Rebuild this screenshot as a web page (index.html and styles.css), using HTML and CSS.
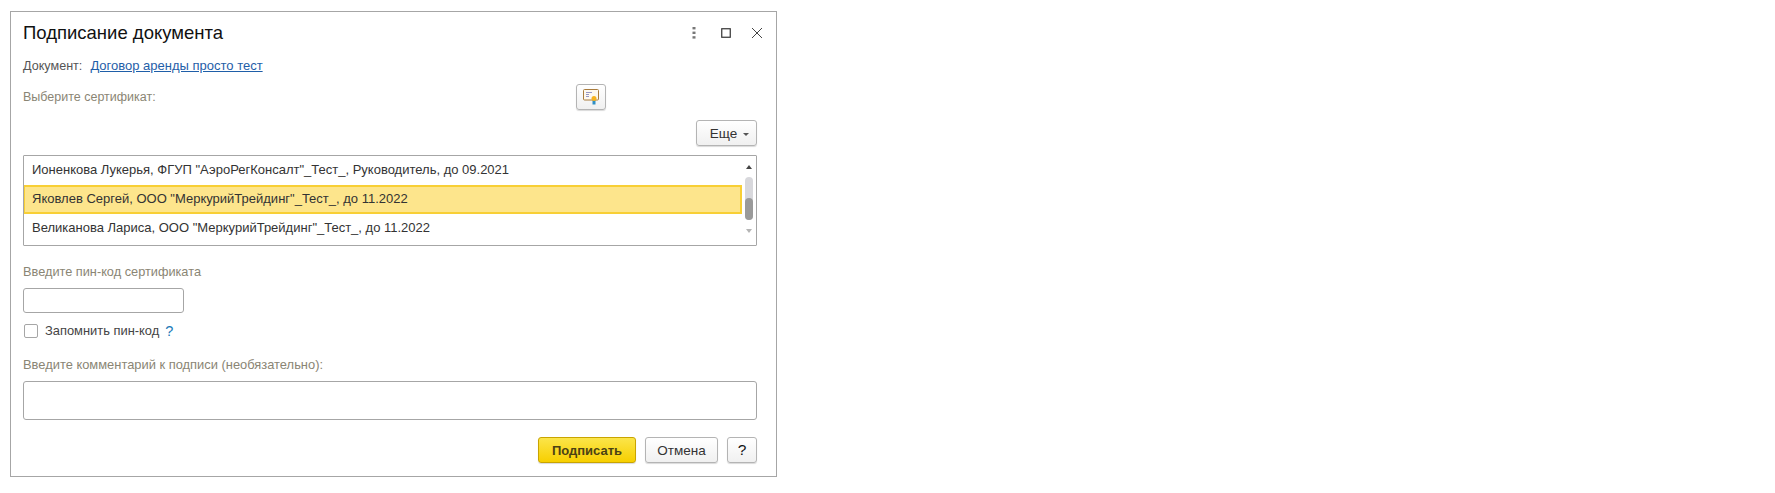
FILE: index.html
```html
<!DOCTYPE html>
<html lang="ru">
  <head>
    <meta charset="UTF-8" />
    <title>Подписание документа</title>
    <link rel="stylesheet" href="styles.css">
  </head>
  <body>
    <div class="dialog">
      <div class="title-row">
        <div class="title">Подписание документа</div>
        <div class="window-tools">
          <svg class="tool-dots" width="4" height="12" viewBox="0 0 4 12"><rect x="0.5" y="0" width="3" height="2.4" fill="#777"/><rect x="0.5" y="4.6" width="3" height="2.4" fill="#777"/><rect x="0.5" y="9.2" width="3" height="2.4" fill="#777"/></svg>
          <svg class="tool-max" width="10" height="10" viewBox="0 0 10 10"><rect x="0.75" y="0.75" width="8.5" height="8.5" fill="none" stroke="#333" stroke-width="1.2"/></svg>
          <svg class="tool-close" width="12" height="12" viewBox="0 0 12 12"><path d="M1 1l10 10M11 1L1 11" fill="none" stroke="#444" stroke-width="1"/></svg>
        </div>
      </div>

      <div class="doc-row">
        <span class="doc-label">Документ:</span>
        <a class="doc-link" href="#">Договор аренды просто тест</a>
      </div>

      <div class="cert-row">
        <span class="field-label cert-label">Выберите сертификат:</span>
        <button class="btn btn-icon">
          <svg width="18" height="18" viewBox="0 0 18 18">
            <rect x="1.5" y="1.5" width="15" height="10.5" rx="1" fill="#fdf8ee" stroke="#a87b3c" stroke-width="1"/>
            <path d="M4 4.5h6M4 6.5h3M4 8.5h3" stroke="#8a8ac0" stroke-width="0.9"/>
            <rect x="10.5" y="12" width="3" height="4.5" fill="#2f8fc4"/>
            <circle cx="12" cy="10.5" r="2.5" fill="#f7b21c"/>
          </svg>
        </button>
      </div>

      <div class="more-row">
        <button class="btn btn-more">Еще<span class="caret"></span></button>
      </div>

      <div class="cert-list">
        <div class="cert-rows">
          <div class="cert-item">Ионенкова Лукерья, ФГУП "АэроРегКонсалт"_Тест_, Руководитель, до 09.2021</div>
          <div class="cert-item selected">Яковлев Сергей, ООО "МеркурийТрейдинг"_Тест_, до 11.2022</div>
          <div class="cert-item">Великанова Лариса, ООО "МеркурийТрейдинг"_Тест_, до 11.2022</div>
        </div>
        <div class="scrollbar">
          <span class="arrow-up"></span>
          <div class="track"><div class="thumb"></div></div>
          <span class="arrow-down"></span>
        </div>
      </div>

      <div class="field-label pin-label">Введите пин-код сертификата</div>
      <input class="pin-input" type="password" />

      <label class="remember-row">
        <span class="checkbox"></span>
        <span class="remember-text">Запомнить пин-код</span>
        <span class="hint">?</span>
      </label>

      <div class="field-label comment-label">Введите комментарий к подписи (необязательно):</div>
      <div class="comment-box"></div>

      <div class="footer">
        <button class="btn btn-primary">Подписать</button>
        <button class="btn btn-cancel">Отмена</button>
        <button class="btn btn-help">?</button>
      </div>
    </div>
  </body>
</html>
```

FILE: styles.css
```css
* {
  margin: 0;
  padding: 0;
  box-sizing: border-box;
}

body {
  font-family: "Liberation Sans", Arial, sans-serif;
  font-size: 13px;
  color: #333;
  background-color: #fff;
  padding: 11px 0 0 10px;
  height: 100vh;
  overflow: hidden;
}

.dialog {
  width: 767px;
  height: 466px;
  border: 1px solid #a6a6a6;
  padding: 0 19px 0 12px;
  background-color: #fff;
}

.title-row {
  display: flex;
  justify-content: space-between;
  align-items: center;
  height: 42px;
}

.title {
  font-size: 18.5px;
  color: #111;
}

.window-tools {
  display: flex;
  align-items: center;
  margin-right: -6px;
}

.tool-max {
  margin-left: 25px;
}

.tool-close {
  margin-left: 20px;
}

.doc-row {
  display: flex;
  align-items: center;
  height: 23px;
}

.doc-label {
  color: #555;
  font-size: 12.6px;
}

.doc-link {
  color: #1f5ea8;
  margin-left: 8px;
}

.cert-row {
  display: flex;
  align-items: center;
  justify-content: space-between;
  height: 26px;
  margin-top: 7px;
  width: 583px;
}

.field-label {
  color: #8a8574;
}

.cert-label {
  font-size: 12.5px;
}

.btn {
  font-family: inherit;
  font-size: 13px;
  color: #333;
  height: 26px;
  border: 1px solid #b4b4b4;
  border-radius: 3px;
  background: linear-gradient(#fff, #f0f0f0);
  box-shadow: 0 1px 1px rgba(0, 0, 0, 0.15);
}

.btn-icon {
  width: 30px;
  display: flex;
  align-items: center;
  justify-content: center;
}

.more-row {
  display: flex;
  justify-content: flex-end;
  margin-top: 10px;
}

.btn-more {
  width: 61px;
  padding-left: 6px;
  display: flex;
  align-items: center;
  justify-content: center;
  font-size: 13.5px;
}

.caret {
  margin-left: 6px;
  margin-top: 2px;
  border: 3px solid transparent;
  border-top-color: #555;
  border-bottom-width: 0;
}

.cert-list {
  display: flex;
  height: 91px;
  margin-top: 9px;
  border: 1px solid #a6a6a6;
  border-radius: 1px;
}

.cert-rows {
  width: 718px;
}

.cert-item {
  height: 29px;
  line-height: 28px;
  padding-left: 8px;
}

.cert-item.selected {
  background-color: #fde58c;
  border: 2px solid #f8cf35;
  border-left-width: 1px;
  padding-left: 7px;
  line-height: 24px;
}

.scrollbar {
  flex: 1;
  display: flex;
  flex-direction: column;
  align-items: center;
  padding-top: 9px;
}

.arrow-up {
  border: 3px solid transparent;
  border-bottom: 4px solid #444;
  border-top-width: 0;
}

.track {
  width: 8px;
  height: 43px;
  margin-top: 8px;
  padding-top: 21px;
  background-color: #d8d8dc;
  border-radius: 4px;
}

.thumb {
  height: 22px;
  background-color: #9a9a9a;
  border-radius: 4px;
}

.arrow-down {
  margin-top: 9px;
  border: 3px solid transparent;
  border-top: 4px solid #b5b5b5;
  border-bottom-width: 0;
}

.pin-label {
  margin-top: 18px;
  font-size: 12.75px;
  line-height: 15px;
}

.pin-input {
  display: block;
  width: 161px;
  height: 25px;
  margin-top: 9px;
  border: 1px solid #a6a6a6;
  border-radius: 3px;
  background-color: #fff;
}

.remember-row {
  display: flex;
  align-items: center;
  height: 16px;
  margin-top: 10px;
  padding-left: 1px;
}

.checkbox {
  width: 14px;
  height: 14px;
  border: 1px solid #a6a6a6;
  border-radius: 2px;
}

.remember-text {
  margin-left: 7px;
  padding-bottom: 1px;
  font-size: 12.9px;
  color: #444;
}

.hint {
  margin-left: 6px;
  padding-bottom: 1px;
  color: #1c7ab8;
  font-size: 14.5px;
}

.comment-label {
  margin-top: 18px;
  font-size: 12.9px;
  line-height: 15px;
}

.comment-box {
  height: 39px;
  margin-top: 9px;
  border: 1px solid #a6a6a6;
  border-radius: 3px;
}

.footer {
  display: flex;
  justify-content: flex-end;
  gap: 9px;
  margin-top: 17px;
}

.btn-primary {
  width: 98px;
  font-weight: bold;
  font-size: 13px;
  color: #4a4214;
  border-color: #c9a400;
  background: linear-gradient(#fbe54a, #f7cf00);
}

.btn-cancel {
  width: 73px;
  font-size: 13.5px;
}

.btn-help {
  width: 30px;
  font-size: 15.5px;
  color: #111;
}
```
